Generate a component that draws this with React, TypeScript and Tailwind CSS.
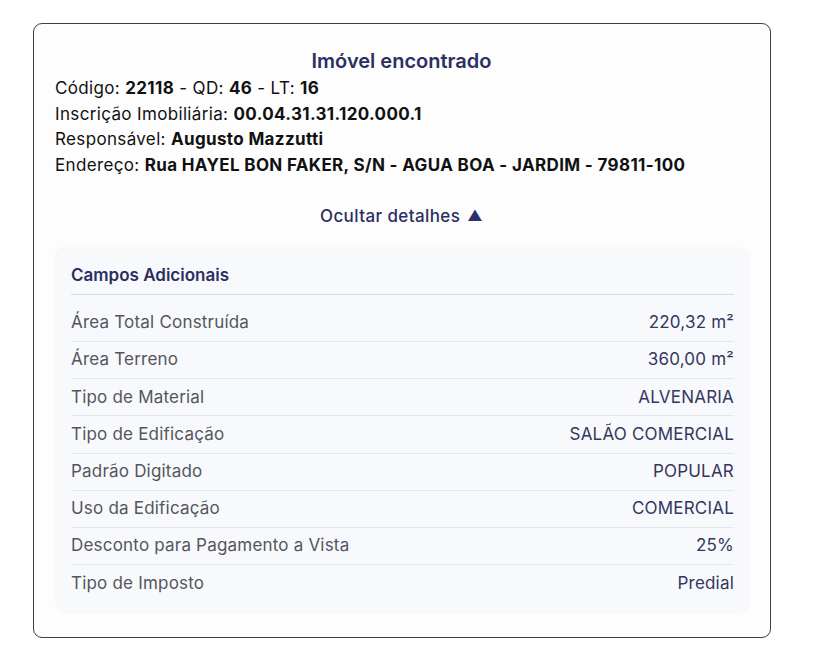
import React from "react";

const rows: [string, string][] = [
  ["Área Total Construída", "220,32 m²"],
  ["Área Terreno", "360,00 m²"],
  ["Tipo de Material", "ALVENARIA"],
  ["Tipo de Edificação", "SALÃO COMERCIAL"],
  ["Padrão Digitado", "POPULAR"],
  ["Uso da Edificação", "COMERCIAL"],
  ["Desconto para Pagamento a Vista", "25%"],
  ["Tipo de Imposto", "Predial"],
];

export default function App() {
  return (
    <div
      className="min-h-[650px] bg-white pt-[23px] pl-[33px]"
      style={{ fontFamily: "Inter, 'Noto Sans', sans-serif" }}
    >
      <div className="w-[738px] rounded-[9px] border-[1.5px] border-[#3f3f3f] bg-[#fdfdfd] pl-[21px] pr-[22px] pt-[24px] pb-[26px]">
        <h2 className="text-center text-[20px] leading-[26px] font-semibold text-[#2b2f62]">
          Imóvel encontrado
        </h2>
        <div className="mt-[2px] text-[17px] leading-[25.5px] tracking-[0.35px] text-[#111]">
          <p>
            Código: <b className="font-bold">22118</b> - QD: <b className="font-bold">46</b> - LT:{" "}
            <b className="font-bold">16</b>
          </p>
          <p>
            Inscrição Imobiliária: <b className="font-bold">00.04.31.31.120.000.1</b>
          </p>
          <p>
            Responsável: <b className="font-bold">Augusto Mazzutti</b>
          </p>
          <p>
            Endereço: <b className="font-bold">Rua HAYEL BON FAKER, S/N - AGUA BOA - JARDIM - 79811-100</b>
          </p>
        </div>
        <div className="mt-[26px] flex justify-center">
          <button className="flex items-center gap-[7px] text-[17px] leading-[24px] tracking-[0.4px] font-medium text-[#2b2f5e]">
            Ocultar detalhes <span className="text-[15px] text-[#2a2f6e]">▲</span>
          </button>
        </div>
        <div className="mt-[21px] ml-[2px] rounded-[8px] bg-[#f8f9fc] px-[14px] pt-[14px] pb-[9px] shadow-[0_0_4px_rgba(0,0,0,0.06)]">
          <div className="border-b border-[#d9dbe0] pb-[7px] text-[17px] leading-[24px] font-semibold text-[#2b2f5e]">
            Campos Adicionais
          </div>
          <div className="mt-[10px]">
            {rows.map(([k, v], i) => (
              <div
                key={k}
                className={
                  "flex h-[37.15px] items-center justify-between text-[17px] tracking-[0.2px] " +
                  (i < rows.length - 1 ? "border-b border-[#e6e7ea]" : "")
                }
              >
                <span className="text-[#53565d]">{k}</span>
                <span className="text-[#33375c]">{v}</span>
              </div>
            ))}
          </div>
        </div>
      </div>
    </div>
  );
}
